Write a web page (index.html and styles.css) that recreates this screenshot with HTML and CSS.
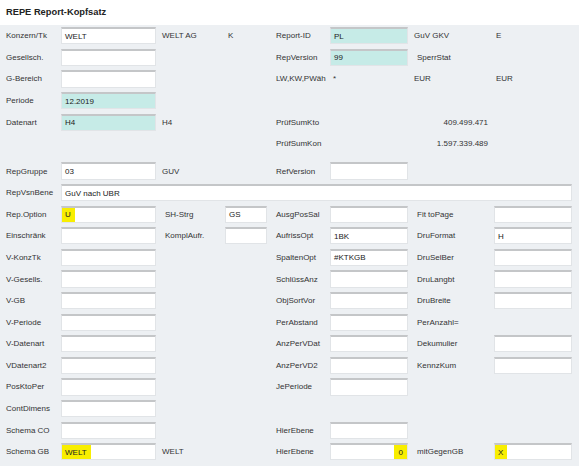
FILE: index.html
```html
<!DOCTYPE html>
<html lang="de">
<head>
    <meta charset="UTF-8">
    <title>REPE Report-Kopfsatz</title>
    <link rel="stylesheet" href="styles.css">
</head>
<body>

    <div class="title">REPE Report-Kopfsatz</div>

    <div class="form">

        <div class="row">
            <span>Konzern/Tk</span>
            <div class="fld"><span>WELT</span></div>
            <span class="txt">WELT AG</span>
            <span class="txt k">K</span>
            <span>Report-ID</span>
            <div class="fld teal"><span>PL</span></div>
            <span class="txt">GuV GKV</span>
            <span class="txt e">E</span>
        </div>

        <div class="row">
            <span>Gesellsch.</span>
            <div class="fld"></div>
            <span></span><span></span>
            <span>RepVersion</span>
            <div class="fld teal"><span>99</span></div>
            <span class="lbl">SperrStat</span>
        </div>

        <div class="row">
            <span>G-Bereich</span>
            <div class="fld"></div>
            <span></span><span></span>
            <span>LW,KW,PWäh</span>
            <span class="txt star">*</span>
            <span class="txt">EUR</span>
            <span class="txt e">EUR</span>
        </div>

        <div class="row">
            <span>Periode</span>
            <div class="fld teal"><span>12.2019</span></div>
        </div>

        <div class="row">
            <span>Datenart</span>
            <div class="fld teal"><span>H4</span></div>
            <span class="txt">H4</span>
            <span></span>
            <span>PrüfSumKto</span>
            <span></span>
            <span class="num">409.499.471</span>
        </div>

        <div class="row">
            <span></span><span></span><span></span><span></span>
            <span>PrüfSumKon</span>
            <span></span>
            <span class="num">1.597.339.489</span>
        </div>

        <div class="row gap">
            <span>RepGruppe</span>
            <div class="fld"><span>03</span></div>
            <span class="txt">GUV</span>
            <span></span>
            <span>RefVersion</span>
            <div class="fld"></div>
        </div>

        <div class="row">
            <span>RepVsnBene</span>
            <div class="fld wide"><span>GuV nach UBR</span></div>
        </div>

        <div class="row">
            <span>Rep.Option</span>
            <div class="fld"><span class="hl">U</span></div>
            <span class="lbl">SH-Strg</span>
            <div class="fld small"><span>GS</span></div>
            <span>AusgPosSal</span>
            <div class="fld"></div>
            <span class="lbl">Fit toPage</span>
            <div class="fld"></div>
        </div>

        <div class="row">
            <span>Einschränk</span>
            <div class="fld"></div>
            <span class="lbl">KomplAufr.</span>
            <div class="fld small"></div>
            <span>AufrissOpt</span>
            <div class="fld"><span>1BK</span></div>
            <span class="lbl">DruFormat</span>
            <div class="fld"><span>H</span></div>
        </div>

        <div class="row">
            <span>V-KonzTk</span>
            <div class="fld"></div>
            <span></span><span></span>
            <span>SpaltenOpt</span>
            <div class="fld"><span>#KTKGB</span></div>
            <span class="lbl">DruSelBer</span>
            <div class="fld"></div>
        </div>

        <div class="row">
            <span>V-Gesells.</span>
            <div class="fld"></div>
            <span></span><span></span>
            <span>SchlüssAnz</span>
            <div class="fld"></div>
            <span class="lbl">DruLangbt</span>
            <div class="fld"></div>
        </div>

        <div class="row">
            <span>V-GB</span>
            <div class="fld"></div>
            <span></span><span></span>
            <span>ObjSortVor</span>
            <div class="fld"></div>
            <span class="lbl">DruBreite</span>
            <div class="fld"></div>
        </div>

        <div class="row">
            <span>V-Periode</span>
            <div class="fld"></div>
            <span></span><span></span>
            <span>PerAbstand</span>
            <div class="fld"></div>
            <span class="lbl">PerAnzahl=</span>
        </div>

        <div class="row">
            <span>V-Datenart</span>
            <div class="fld"></div>
            <span></span><span></span>
            <span>AnzPerVDat</span>
            <div class="fld"></div>
            <span class="lbl">Dekumulier</span>
            <div class="fld"></div>
        </div>

        <div class="row">
            <span>VDatenart2</span>
            <div class="fld"></div>
            <span></span><span></span>
            <span>AnzPerVD2</span>
            <div class="fld"></div>
            <span class="lbl">KennzKum</span>
            <div class="fld"></div>
        </div>

        <div class="row">
            <span>PosKtoPer</span>
            <div class="fld"></div>
            <span></span><span></span>
            <span>JePeriode</span>
            <div class="fld"></div>
        </div>

        <div class="row">
            <span>ContDimens</span>
            <div class="fld"></div>
        </div>

        <div class="row">
            <span>Schema CO</span>
            <div class="fld"></div>
            <span></span><span></span>
            <span>HierEbene</span>
            <div class="fld"></div>
        </div>

        <div class="row">
            <span>Schema GB</span>
            <div class="fld"><span class="hl">WELT</span></div>
            <span class="txt">WELT</span>
            <span></span>
            <span>HierEbene</span>
            <div class="fld right"><span class="hl">0</span></div>
            <span class="lbl">mitGegenGB</span>
            <div class="fld"><span class="hl">X</span></div>
        </div>

    </div>

</body>
</html>
```

FILE: styles.css
```css
body{
    margin: 0;
    background-color: #edf0f3;
    font-family: "Liberation Sans", Arial, sans-serif;
    font-size: 8px;
    color: #333;
}

.title{
    background-color: #fff;
    height: 25px;
    line-height: 24px;
    padding-left: 6px;
    font-size: 9.3px;
    font-weight: bold;
    color: #222;
}

.form{
    padding-left: 6px;
}

.row{
    display: grid;
    grid-template-columns: 55px 95px 69px 51px 54px 78px 86px 78px;
    height: 21.6px;
    align-items: center;
    white-space: nowrap;
}

.gap{
    margin-top: 5.7px;
}

.txt{
    padding-left: 6px;
}

.lbl{
    padding-left: 9px;
}

.k{
    padding-left: 3px;
}

.star{
    padding-left: 3px;
}

.e{
    padding-left: 2px;
}

.num{
    text-align: right;
    padding-right: 6px;
}

/* eingabefelder */
.fld{
    box-sizing: border-box;
    height: 17.3px;
    background-color: #fff;
    border: 1px solid #e1e4e7;
    border-top: 2px solid #c4c6c8;
    display: flex;
    color: #222;
}

.fld span{
    display: flex;
    align-items: center;
    padding: 0 3px;
}

.teal{
    background-color: #c6ebe7;
}

.wide{
    grid-column: 2 / -1;
}

.small{
    width: 42px;
}

.right{
    justify-content: flex-end;
}

.fld .hl{
    background-color: #f8ee00;
    padding: 0 4px 0 3px;
}

.right .hl{
    padding: 0 4px 0 5px;
}
```
